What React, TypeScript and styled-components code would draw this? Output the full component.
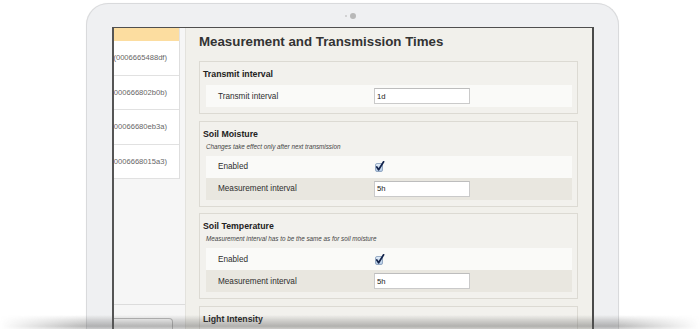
import styled, { createGlobalStyle } from "styled-components";

const GlobalStyle = createGlobalStyle`
  html, body {
    margin: 0;
    padding: 0;
    background: #ffffff;
  }
  body {
    font-family: "Liberation Sans", Arial, sans-serif;
  }
`;

const Page = styled.div`
  position: relative;
  width: 700px;
  height: 329px;
  overflow: hidden;
  background: #ffffff;
  padding: 3px 0 0 86px;
  box-sizing: border-box;
`;

const Bezel = styled.div`
  width: 533px;
  height: 380px;
  box-sizing: border-box;
  display: flex;
  flex-direction: column;
  padding: 0 24px 0 25px;
  background: #eff0f2;
  border: 1px solid #d9dadc;
  border-bottom: none;
  border-radius: 22px 22px 0 0;
  box-shadow: 0 0 1px rgba(0, 0, 0, 0.08);
`;

const CameraBar = styled.div`
  height: 23px;
  display: flex;
  align-items: center;
  justify-content: center;
  gap: 3px;
  padding-right: 5px;
`;

const CameraDot = styled.span<{ $size: number; $color: string }>`
  width: ${(p) => p.$size}px;
  height: ${(p) => p.$size}px;
  border-radius: 50%;
  background: ${(p) => p.$color};
`;

const Screen = styled.div`
  display: flex;
  height: 320px;
  border-top: 1px solid #4f4f4f;
  border-left: 2px solid #555555;
  border-right: 2px solid #4a4a4a;
  background: #f1f0eb;
`;

const Sidebar = styled.div`
  width: 71px;
  flex-shrink: 0;
  display: flex;
  flex-direction: column;
  background: #f6f6f6;
`;

const SelectedBar = styled.div`
  width: 66px;
  height: 13px;
  background: #fcdda0;
  border-right: 1px solid #e2e2e2;
  box-sizing: border-box;
`;

const List = styled.div`
  width: 66px;
  display: flex;
  flex-direction: column;
  background: #ffffff;
  border-right: 1px solid #dedede;
  box-sizing: border-box;
`;

const ListItem = styled.div`
  height: 34.5px;
  box-sizing: border-box;
  display: flex;
  align-items: center;
  justify-content: flex-end;
  overflow: hidden;
  white-space: nowrap;
  padding-right: 12px;
  border-bottom: 1px solid #e1e1e1;
  font-size: 7.6px;
  color: #666666;
`;

const SidebarFooter = styled.div`
  margin-top: auto;
  height: 44px;
  box-sizing: border-box;
  border-top: 1px solid #dcdcdc;
  padding-top: 13px;
`;

const FooterButton = styled.div`
  width: 59px;
  height: 22px;
  box-sizing: border-box;
  border: 1px solid #b9b9b9;
  border-left: none;
  border-radius: 0 4px 4px 0;
  background: linear-gradient(#fdfdfd, #ececec);
`;

const Main = styled.div`
  flex: 1;
  min-width: 0;
  overflow: hidden;
  border-left: 1px solid #e3e2dd;
  padding: 6px 14px 0 13px;
  background: #f1f0eb;
`;

const Title = styled.h1`
  margin: 0 0 11px;
  font-size: 13.3px;
  line-height: 16px;
  font-weight: bold;
  color: #333333;
`;

const Panels = styled.div`
  display: flex;
  flex-direction: column;
  gap: 6.5px;
`;

const Panel = styled.div`
  border: 1px solid #dcdad3;
  background: #f2f1ed;
  padding: 5px 5px 6px 6px;
`;

const PanelHeader = styled.div`
  margin-left: -3px;
  font-size: 8.75px;
  line-height: 14px;
  font-weight: bold;
  color: #222222;
`;

const Note = styled.div`
  font-size: 6.3px;
  line-height: 11px;
  font-style: italic;
  color: #444444;
`;

const Rows = styled.div`
  margin-top: 4px;
  display: flex;
  flex-direction: column;
`;

const Row = styled.div<{ $shade: boolean }>`
  height: 22px;
  display: flex;
  align-items: center;
  padding-left: 12px;
  background: ${(p) => (p.$shade ? "#e9e7e0" : "#fafaf8")};
`;

const Label = styled.div`
  width: 156px;
  font-size: 8.2px;
  color: #2e2e2e;
`;

const TextInput = styled.input`
  width: 96px;
  height: 16px;
  box-sizing: border-box;
  margin: 0;
  padding: 0 2px;
  border: 1px solid #cacaca;
  border-top-color: #bdbdbd;
  background: #ffffff;
  font-family: "Liberation Sans", Arial, sans-serif;
  font-size: 7.7px;
  color: #222222;
  outline: none;
`;

const CheckMark = styled.svg`
  display: block;
  margin-left: 1px;
`;

const BaseShadow = styled.div`
  position: absolute;
  left: 0;
  right: 0;
  bottom: 0;
  height: 14px;
  background: linear-gradient(
    to bottom,
    rgba(90, 90, 90, 0) 0%,
    rgba(90, 90, 90, 0.2) 35%,
    rgba(90, 90, 90, 0.42) 80%,
    rgba(120, 120, 120, 0.3) 100%
  );
  -webkit-mask-image: linear-gradient(to right, transparent 0%, #000 12%, #000 88%, transparent 100%);
  mask-image: linear-gradient(to right, transparent 0%, #000 12%, #000 88%, transparent 100%);
  pointer-events: none;
`;

const Checkbox = () => (
  <CheckMark width="10" height="11" viewBox="0 0 10 11">
    <defs>
      <linearGradient id="cb" x1="0" y1="0" x2="0" y2="1">
        <stop offset="0" stopColor="#e3edf8" />
        <stop offset="1" stopColor="#b4cbe6" />
      </linearGradient>
    </defs>
    <rect x="0.5" y="2.5" width="7" height="8" rx="1.5" fill="url(#cb)" stroke="#8199b8" strokeWidth="0.8" />
    <path d="M1.8 6 L3.6 8.8 L8.6 0.8" fill="none" stroke="#13234b" strokeWidth="1.7" strokeLinecap="round" strokeLinejoin="round" />
  </CheckMark>
);

const sensors = ["(0006665488df)", "(000666802b0b)", "(00066680eb3a)", "(0006668015a3)"];

type Field = { label: string; value?: string; checked?: boolean };

const sections: { title: string; note?: string; fields: Field[] }[] = [
  { title: "Transmit interval", fields: [{ label: "Transmit interval", value: "1d" }] },
  {
    title: "Soil Moisture",
    note: "Changes take effect only after next transmission",
    fields: [
      { label: "Enabled", checked: true },
      { label: "Measurement interval", value: "5h" },
    ],
  },
  {
    title: "Soil Temperature",
    note: "Measurement interval has to be the same as for soil moisture",
    fields: [
      { label: "Enabled", checked: true },
      { label: "Measurement interval", value: "5h" },
    ],
  },
  {
    title: "Light Intensity",
    fields: [
      { label: "Enabled", checked: true },
      { label: "Measurement interval", value: "5h" },
    ],
  },
];

export default function App() {
  return (
    <Page>
      <GlobalStyle />
      <Bezel>
        <CameraBar>
          <CameraDot $size={2} $color="#c9c9c9" />
          <CameraDot $size={6} $color="#b8b8b8" />
        </CameraBar>
        <Screen>
          <Sidebar>
            <SelectedBar />
            <List>
              {sensors.map((s) => (
                <ListItem key={s}>{s}</ListItem>
              ))}
            </List>
            <SidebarFooter>
              <FooterButton />
            </SidebarFooter>
          </Sidebar>
          <Main>
            <Title>Measurement and Transmission Times</Title>
            <Panels>
              {sections.map((sec) => (
                <Panel key={sec.title}>
                  <PanelHeader>{sec.title}</PanelHeader>
                  {sec.note && <Note>{sec.note}</Note>}
                  <Rows>
                    {sec.fields.map((f, i) => (
                      <Row key={f.label} $shade={sec.fields.length > 1 && i % 2 === 1}>
                        <Label>{f.label}</Label>
                        {f.checked ? <Checkbox /> : <TextInput readOnly defaultValue={f.value} />}
                      </Row>
                    ))}
                  </Rows>
                </Panel>
              ))}
            </Panels>
          </Main>
        </Screen>
      </Bezel>
      <BaseShadow />
    </Page>
  );
}
